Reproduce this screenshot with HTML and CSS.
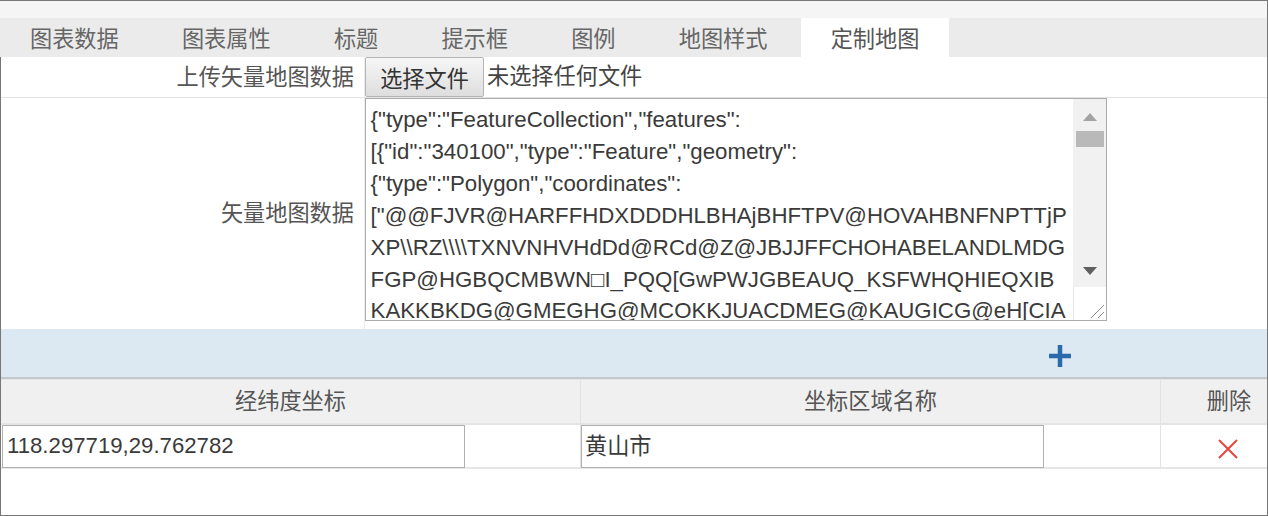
FILE: index.html
```html
<!DOCTYPE html>
<html lang="zh">
<head>
<meta charset="utf-8">
<title>定制地图</title>
<link rel="stylesheet" href="styles.css">
</head>
<body>
<div class="panel">
  <div class="tabs">
    <div class="tab">图表数据</div>
    <div class="tab">图表属性</div>
    <div class="tab">标题</div>
    <div class="tab">提示框</div>
    <div class="tab">图例</div>
    <div class="tab">地图样式</div>
    <div class="tab active">定制地图</div>
  </div>
  <div class="row upload">
    <div class="label">上传矢量地图数据</div>
    <div class="field file">
      <button class="file-btn" type="button">选择文件</button>
      <span class="file-name">未选择任何文件</span>
    </div>
  </div>
  <div class="row data">
    <div class="label">矢量地图数据</div>
    <div class="field">
      <div class="textarea">
        <div class="ta-text">{"type":"FeatureCollection","features":
[{"id":"340100","type":"Feature","geometry":
{"type":"Polygon","coordinates":
["@@FJVR@HARFFHDXDDDHLBHAjBHFTPV@HOVAHBNFNPTTjP
XP\\RZ\\\\TXNVNHVHdDd@RCd@Z@JBJJFFCHOHABELANDLMDG
FGP@HGBQCMBWN□I_PQQ[GwPWJGBEAUQ_KSFWHQHIEQXIB
KAKKBKDG@GMEGHG@MCOKKJUACDMEG@KAUGICG@eH[CIA</div>
        <div class="ta-side">
          <div class="scrollbar">
            <svg class="arrow up" width="16" height="8" viewBox="0 0 16 8"><path d="M8 0L15 8H1Z" fill="#a3a3a3"/></svg>
            <div class="thumb"></div>
            <svg class="arrow down" width="16" height="8" viewBox="0 0 16 8"><path d="M1 0H15L8 8Z" fill="#606060"/></svg>
          </div>
          <div class="resizer">
            <svg width="16" height="16" viewBox="0 0 16 16"><path d="M2 15L15 2M9 15L15 9" stroke="#8a8a8a" fill="none"/></svg>
          </div>
        </div>
      </div>
    </div>
  </div>
  <div class="add-bar">
    <svg class="plus" width="24" height="24" viewBox="0 0 24 24"><path d="M12 1V23M1 12H23" stroke="#2a6aab" stroke-width="4.5"/></svg>
  </div>
  <div class="grid head">
    <div class="cell">经纬度坐标</div>
    <div class="cell">坐标区域名称</div>
    <div class="cell">删除</div>
  </div>
  <div class="grid body">
    <div class="cell"><div class="input">118.297719,29.762782</div></div>
    <div class="cell"><div class="input input-cn">黄山市</div></div>
    <div class="cell">
      <svg class="del" width="20" height="20" viewBox="0 0 20 20"><path d="M1 1L19 19M19 1L1 19" stroke="#e8453c" stroke-width="2"/></svg>
    </div>
  </div>
</div>
</body>
</html>
```

FILE: styles.css
```css
* { box-sizing: border-box; }
html, body { margin: 0; padding: 0; background: #fff; }
body { width: 1268px; height: 516px; overflow: hidden; }
.panel {
  width: 1268px;
  height: 516px;
  border: 1px solid #777;
  font-family: "Liberation Sans", "Noto Sans CJK SC", sans-serif;
  font-size: 22.2px;
  color: #333;
  background: #fff;
  display: flex;
  flex-direction: column;
}
.tabs {
  height: 56px;
  flex: none;
  padding: 17px 0 0 0;
  margin-left: -1px;
  background: linear-gradient(#f5f5f5 0 17px, #ebebeb 17px);
  display: flex;
  align-items: stretch;
  gap: 3.2px;
}
.tab {
  display: flex;
  align-items: center;
  padding: 0 30px 1px;
  color: #666;
}
.tab.active { background: #fff; color: #555; }
.row { display: flex; border-bottom: 1px solid #e4e4e4; flex: none; }
.upload { height: 41px; }
.data { height: 231px; border-bottom: 0; }
.label {
  width: 364px;
  flex: none;
  padding-right: 10px;
  color: #555;
  display: flex;
  align-items: center;
  justify-content: flex-end;
  border-right: 1px solid #ececec;
}
.upload .label { padding-bottom: 4px; }
.data .label { padding-bottom: 6px; }
.field { flex: 1; min-width: 0; }
.file { display: flex; align-items: flex-start; }
.file-btn {
  width: 119px;
  height: 40px;
  margin: 0;
  padding: 0;
  border: 1px solid #b4b4b4;
  border-radius: 2px;
  background: linear-gradient(#f6f6f6, #dedede);
  font: inherit;
  color: #333;
}
.file-name { margin-left: 3px; line-height: 40px; color: #444; }
.textarea {
  width: 742px;
  height: 223px;
  border: 1px solid #ababab;
  display: flex;
  overflow: hidden;
}
.ta-text {
  flex: 1;
  min-width: 0;
  padding: 5px 0 0 4.6px;
  white-space: pre;
  overflow: hidden;
  font-size: 22.25px;
  line-height: 31.9px;
  color: #3a3a3a;
}
.ta-side { width: 33px; flex: none; display: flex; flex-direction: column; }
.scrollbar {
  height: 188px;
  background: #f1f1f1;
  display: flex;
  flex-direction: column;
  align-items: center;
  padding-top: 14px;
}
.arrow { display: block; flex: none; }
.thumb { width: 28px; height: 16px; background: #b9b9b9; margin-top: 10px; }
.arrow.down { margin-top: 120px; }
.resizer {
  flex: 1;
  display: flex;
  align-items: flex-end;
  justify-content: flex-end;
  background: #fff;
  border-left: 1px solid #e6e6e6;
  padding: 0 1px 1px 0;
}
.resizer svg { display: block; }
.add-bar {
  height: 50px;
  flex: none;
  background: #dde9f2;
  border-bottom: 2px solid #c4c8cb;
  display: flex;
  align-items: center;
  justify-content: flex-end;
  padding: 6px 195px 0 0;
}
.plus { display: block; }
.grid {
  display: grid;
  grid-template-columns: 580px 580px 1fr;
  flex: none;
}
.head {
  height: 46px;
  background: #f0f0f0;
  border-bottom: 2px solid #e4e4e4;
  border-top: 1px solid #e6e6e6;
}
.body { height: 44px; border-bottom: 2px solid #e6e6e6; }
.cell {
  display: flex;
  align-items: center;
  justify-content: center;
  border-right: 1px solid #e2e2e2;
  color: #555;
}
.cell:last-child { border-right: 0; }
.head .cell { padding-bottom: 6px; }
.head .cell:last-child { padding-left: 30px; }
.body .cell { justify-content: flex-start; }
.body .cell:last-child { justify-content: center; padding: 5px 0 0 28px; }
.input {
  width: 463px;
  height: 43px;
  border: 1px solid #b0b0b0;
  padding: 0 0 2px 4px;
  display: flex;
  align-items: center;
  color: #3a3a3a;
  white-space: nowrap;
  flex: none;
}
.input-cn { padding: 0 0 5px 3px; }
.cell:first-child .input { margin-left: 1px; }
.del { display: block; }
```
